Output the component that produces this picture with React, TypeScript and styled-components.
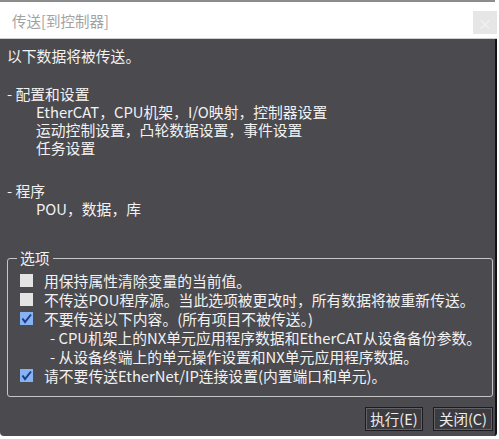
import React from 'react'
import styled, { createGlobalStyle } from 'styled-components'

const GlobalStyle = createGlobalStyle`
  body {
    margin: 0;
    background: #ffffff;
    font-family: "Noto Sans CJK SC", "Noto Sans", sans-serif;
  }
`

const Window = styled.div`
  width: 497px;
  display: flex;
  flex-direction: column;
`

const TopLine = styled.div`
  width: 495px;
  height: 2px;
  background: #8c8c8c;
`

const TitleBar = styled.div`
  height: 36px;
  display: flex;
  align-items: center;
  justify-content: space-between;
  padding-left: 12px;
  background: #ffffff;
  border-bottom: 1px solid #cfcfcf;
`

const Title = styled.span`
  font-size: 14.5px;
  color: #a2a2a2;
`

const CloseButton = styled.div`
  width: 24px;
  height: 23px;
  margin-top: 5px;
  background: #e6e6e6;
  color: #f4f4f4;
  font-size: 14px;
  display: flex;
  align-items: center;
  justify-content: center;
`

const Body = styled.div`
  height: 397px;
  box-sizing: border-box;
  background: #4b4a4f;
  border-right: 2px solid #141414;
  border-bottom-left-radius: 4px;
  border-bottom-right-radius: 3px;
  padding: 8px 0 5px 7px;
  display: flex;
  flex-direction: column;
  color: #f2f2f2;
  font-size: 14.8px;
  line-height: 18px;
`

const Line = styled.div<{ $indent?: number }>`
  padding-left: ${p => p.$indent ?? 0}px;
  white-space: nowrap;
`

const Section = styled.div<{ $gap: number }>`
  margin-top: ${p => p.$gap}px;
  display: flex;
  flex-direction: column;
`

const Group = styled.fieldset`
  margin: 31px 0 0 0;
  width: 486px;
  box-sizing: border-box;
  border: 1px solid #c6c6c6;
  border-radius: 3px;
  padding: 4px 0 11px 9px;
  display: flex;
  flex-direction: column;
`

const Legend = styled.legend`
  padding: 0 3px;
  line-height: 18px;
`

const Row = styled.div<{ $indent?: number }>`
  height: 19px;
  display: flex;
  align-items: center;
  padding-left: ${p => p.$indent ?? 3}px;
  white-space: nowrap;
`

const Box = styled.span<{ $checked?: boolean }>`
  width: 13px;
  height: 13px;
  margin-right: 11px;
  flex-shrink: 0;
  background: ${p => (p.$checked ? '#86b4f2' : '#e4e4e4')};
  display: flex;
  align-items: center;
  justify-content: center;
`

const Buttons = styled.div`
  margin-top: auto;
  display: flex;
  justify-content: flex-end;
  gap: 10px;
  padding-right: 2px;
`

const Button = styled.button<{ $w: number }>`
  width: ${p => p.$w}px;
  height: 24px;
  padding: 0;
  background: #3c3b40;
  border: 1px solid #1c1c20;
  box-shadow: inset 0 0 0 1px #626267;
  color: #ececec;
  font-family: inherit;
  font-size: 14.5px;
  line-height: 18px;
`

const Check = () => (
  <svg width="13" height="13" viewBox="0 0 13 13">
    <path d="M2.5 6.5 L5 10 L11 2.5" fill="none" stroke="#1c3a8e" strokeWidth="2" />
  </svg>
)

const CheckRow: React.FC<{ checked?: boolean; children: React.ReactNode }> = ({ checked, children }) => (
  <Row>
    <Box $checked={checked}>{checked && <Check />}</Box>
    {children}
  </Row>
)

export default function App() {
  return (
    <>
      <GlobalStyle />
      <Window>
        <TopLine />
        <TitleBar>
          <Title>传送[到控制器]</Title>
          <CloseButton>×</CloseButton>
        </TitleBar>
        <Body>
          <Line>以下数据将被传送。</Line>
          <Section $gap={20}>
            <Line>- 配置和设置</Line>
            <Line $indent={29}>EtherCAT，CPU机架，I/O映射，控制器设置</Line>
            <Line $indent={29}>运动控制设置，凸轮数据设置，事件设置</Line>
            <Line $indent={29}>任务设置</Line>
          </Section>
          <Section $gap={25}>
            <Line>- 程序</Line>
            <Line $indent={29}>POU，数据，库</Line>
          </Section>
          <Group>
            <Legend>选项</Legend>
            <CheckRow>用保持属性清除变量的当前值。</CheckRow>
            <CheckRow>不传送POU程序源。当此选项被更改时，所有数据将被重新传送。</CheckRow>
            <CheckRow checked>不要传送以下内容。(所有项目不被传送。)</CheckRow>
            <Row $indent={33}>- CPU机架上的NX单元应用程序数据和EtherCAT从设备备份参数。</Row>
            <Row $indent={33}>- 从设备终端上的单元操作设置和NX单元应用程序数据。</Row>
            <CheckRow checked>请不要传送EtherNet/IP连接设置(内置端口和单元)。</CheckRow>
          </Group>
          <Buttons>
            <Button $w={58}>执行(E)</Button>
            <Button $w={60}>关闭(C)</Button>
          </Buttons>
        </Body>
      </Window>
    </>
  )
}
